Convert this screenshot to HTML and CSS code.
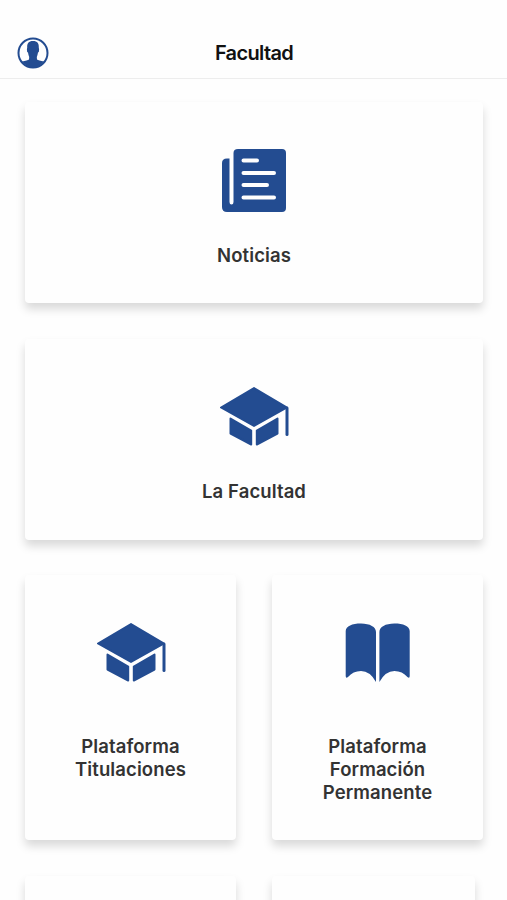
FILE: index.html
```html
<!DOCTYPE html>
<html lang="es">
<head>
<meta charset="utf-8">
<title>Facultad</title>
<link rel="stylesheet" href="styles.css">
</head>
<body>
<svg class="defs" aria-hidden="true">
  <symbol id="cap" viewBox="0 0 70 60">
    <path class="joined" d="M35 1L68 20.500L35 39L2 20.500Z"/>
    <path class="joined" d="M11.500 31.500L32.200 43.500V57.500L11.500 46.500ZM58.500 31.500L37.800 43.500V57.500L58.500 46.500Z"/>
    <path class="tassel" d="M68 21V47.500"/>
  </symbol>
</svg>
<header class="bar">
  <svg class="avatar" viewBox="0 0 32 32">
    <circle class="ring" cx="16" cy="16" r="14.500"/>
    <path d="M16 4C11.500 4 10 6.500 10.200 10.500L9.900 12.500Q9.800 15 11 15.500Q11.500 18.500 12.200 20L12 22.500Q10.500 23.500 5 24.500Q10 30.500 16 30.500T27 24.500Q21.500 23.500 20 22.500L19.800 20Q20.500 18.500 21 15.500Q22.200 15 22.100 12.500L21.800 10.500C22 6.500 20.500 4 16 4Z"/>
  </svg>
  <h1>Facultad</h1>
</header>
<main class="grid">
  <a class="card wide">
    <svg class="icon news" viewBox="0 0 70 70">
      <path d="M19 3H63Q67 3 67 7V62Q67 66 63 66H8Q3 66 3 61V17Q3 12.500 8 12.500H10.500V56Q10.500 58.500 12.500 58.500T14.500 56V7Q14.500 3 19 3Z"/>
      <path class="lines" d="M24.500 14.500H38M24.500 27H55M24.500 39H48M24.500 51.500H55"/>
    </svg>
    <span class="label">Noticias</span>
  </a>
  <a class="card wide">
    <svg class="icon cap"><use href="#cap"/></svg>
    <span class="label">La Facultad</span>
  </a>
  <a class="card">
    <svg class="icon cap"><use href="#cap"/></svg>
    <span class="label">Plataforma Titulaciones</span>
  </a>
  <a class="card">
    <svg class="icon cap" viewBox="0 0 70 60">
      <path d="M2.700 8C3 3 9 .5 18 .5S33 4 33 9V59Q27 48 18 48Q10 48 5 54Q2.700 56 2.700 53ZM66.700 8C66.400 3 60.400 .5 51.400 .5S36.400 4 36.400 9V59Q42.400 48 51.400 48Q59.400 48 64.400 54Q66.700 56 66.700 53Z"/>
    </svg>
    <span class="label">Plataforma Formación Permanente</span>
  </a>
  <a class="card"></a>
  <a class="card clipped"></a>
</main>
</body>
</html>
```
FILE: styles.css
```css
* { box-sizing: border-box; }

body {
  margin: 0;
  height: 900px;
  overflow: hidden;
  background: #fefefe;
  font-family: Inter, "Liberation Sans", sans-serif;
}

.defs { display: block; width: 0; height: 0; }

.bar {
  display: grid;
  grid-template-columns: 1fr auto 1fr;
  align-items: center;
  height: 79px;
  padding: 27px 17px 0;
  border-bottom: 1px solid #ededed;
}

.bar h1 {
  margin: 0;
  padding-left: 1px;
  font-size: 20px;
  font-weight: 600;
  line-height: 24px;
  letter-spacing: -0.65px;
  color: #111;
}

svg { fill: #234c91; }

.avatar { width: 32px; height: 32px; }
.ring { fill: none; stroke: #234c91; stroke-width: 2; }

.grid {
  display: grid;
  grid-template-columns: 211px 211px;
  grid-template-rows: 201px 201px 265px 24px;
  gap: 35.5px 36px;
  height: 821px;
  padding: 23px 24px 0 25px;
  overflow: hidden;
}

.card {
  display: flex;
  flex-direction: column;
  align-items: center;
  padding: 43px 30px 0;
  border-radius: 4px;
  background: #fefefe;
  box-shadow: 0 6px 10px rgba(0, 0, 0, 0.15);
}

.wide { grid-column: span 2; }
.clipped { width: 203px; }

.icon { flex: none; width: 70px; height: 70px; }
.icon.news { margin: 1px 0 0; }
.icon.cap { height: 60px; margin: 5px 0; }

.joined { stroke: #234c91; stroke-width: 2; stroke-linejoin: round; }
.tassel { fill: none; stroke: #234c91; stroke-width: 3; stroke-linecap: round; }
.lines { fill: none; stroke: #fefefe; stroke-width: 4; stroke-linecap: round; }

.label {
  margin-top: 28px;
  font-size: 18.500px;
  font-weight: 600;
  line-height: 23px;
  letter-spacing: 0.1px;
  text-align: center;
  color: #333;
}

.card:not(.wide) .label { margin: 46.5px -5px 0; }
```
